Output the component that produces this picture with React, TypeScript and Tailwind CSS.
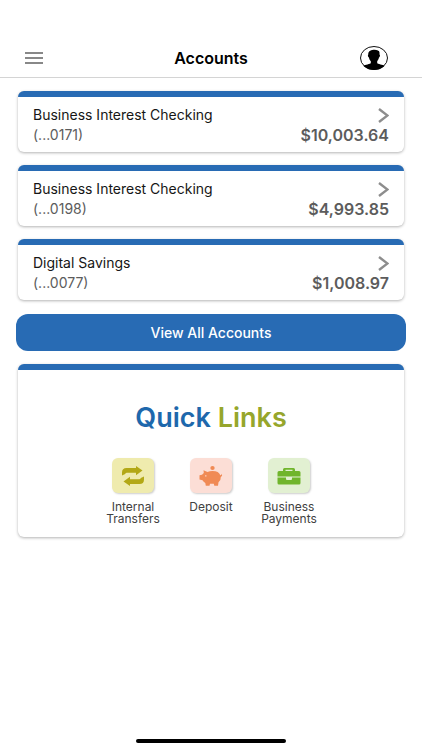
interface Account {
  name: string
  mask: string
  balance: string
}

const accounts: Account[] = [
  { name: 'Business Interest Checking', mask: '(...0171)', balance: '$10,003.64' },
  { name: 'Business Interest Checking', mask: '(...0198)', balance: '$4,993.85' },
  { name: 'Digital Savings', mask: '(...0077)', balance: '$1,008.97' },
]

const quickLinks = [
  { label: 'Internal Transfers', tile: 'bg-[#efebae] text-[#b3a816]', icon: <TransferIcon /> },
  { label: 'Deposit', tile: 'bg-[#fcded6] text-[#f08a55]', icon: <PiggyIcon /> },
  { label: 'Business Payments', tile: 'bg-[#e2f0d2] text-[#70b52c]', icon: <BriefcaseIcon /> },
]

function TransferIcon() {
  return (
    <svg viewBox="0 0 24 20" className="h-5 w-6" fill="currentColor" aria-hidden="true">
      <path d="M1 9.500V6.500Q1 2 5.500 2H15V0L21.500 4.600 15 9.200V6.700H6Q4.500 6.700 4.200 8Z" />
      <path d="M23 10.500V13.500Q23 18 18.500 18H9V20L2.500 15.400 9 10.800V13.300H18Q19.500 13.300 19.800 12Z" />
    </svg>
  )
}

function PiggyIcon() {
  return (
    <svg viewBox="0 0 24 20" className="h-5 w-6" fill="currentColor" aria-hidden="true">
      <ellipse cx="13.500" cy="2" rx="2.200" ry="1.900" />
      <path
        fillRule="evenodd"
        d="M4.500 4.200 8.500 6Q10.500 5 13.500 5 20 5 21.300 9.300 22.700 9.300 22.500 7.800 24 9.500 21.800 11 22 14.500 19.500 16.300L19 19.700H15.300L14.800 17.800H11L10.500 19.700H6.800L6.300 17Q4.500 16 3.500 14.300L.5 13.500V9.300L3 8.800 4.800 7ZM6.200 9.300V10.500H7.400V9.300Z"
      />
    </svg>
  )
}

function BriefcaseIcon() {
  return (
    <svg viewBox="0 0 24 18" className="h-[18px] w-6" fill="currentColor" aria-hidden="true">
      <path
        fillRule="evenodd"
        d="M6 4V2.500Q6 1 7.500 1H16.500Q18 1 18 2.500V4H22Q23.500 4 23.500 5.500V9.500H.5V5.500Q.5 4 2 4ZM8.500 4H15.500V2.700H8.500Z"
      />
      <path d="M.5 10.500H9V12Q9 13 10 13H14Q15 13 15 12V10.500H23.500V16Q23.500 17.500 22 17.500H2Q.5 17.500.5 16Z" />
    </svg>
  )
}

function ProfileIcon() {
  return (
    <svg viewBox="0 0 30 26" className="h-[26px] w-[30px]" aria-hidden="true">
      <clipPath id="profile-clip">
        <ellipse cx="15" cy="13" rx="14" ry="12" />
      </clipPath>
      <ellipse cx="15" cy="13" rx="13.500" ry="11.500" fill="#fff" stroke="#111" />
      <path
        clipPath="url(#profile-clip)"
        d="M9.300 9.500C8.500 3.500 20.500 3.500 20.500 7.500V9.500C21.500 10 20.800 12 20 12.500 19.600 14.500 18.800 15.500 18.200 16.200V18.200C20.500 19.700 25 19.300 26.500 22V26H3.500V22C5 19.300 9.500 19.700 11.800 18.200V16.200C11 15.300 10.200 14.300 10 12.500 9 12 8.500 10 9.300 9.500Z"
      />
    </svg>
  )
}

function AccountCard({ account }: { account: Account }) {
  return (
    <a
      href="#account"
      className="block rounded-md border-t-6 border-[#286bb4] bg-white px-[15px] pt-2 pb-[7px] shadow-[0_1px_3px_rgba(0,0,0,0.3)]"
    >
      <div className="flex h-5 items-center justify-between">
        <h2 className="text-sm text-[#161616]">{account.name}</h2>
        <svg viewBox="0 0 11 15" className="h-[15px] w-[11px]" fill="none" stroke="#8d8d8d" strokeWidth="2.400" aria-hidden="true">
          <path d="M1 1 9.500 7.500 1 14" />
        </svg>
      </div>
      <div className="flex h-5 items-center justify-between text-[#5c5c5c]">
        <span className="text-sm">{account.mask}</span>
        <span className="text-base font-semibold">{account.balance}</span>
      </div>
    </a>
  )
}

export default function App() {
  return (
    <div className="flex min-h-screen flex-col bg-white font-['Inter',sans-serif]">
      <header className="grid grid-cols-3 items-center border-b border-[#d4d4d4] px-[25px] pt-[39px]">
        <button aria-label="Menu" className="flex h-[38px] w-[18px] flex-col justify-center gap-[3px]">
          <span className="h-0.5 w-full bg-[#888]" />
          <span className="h-0.5 w-full bg-[#888]" />
          <span className="h-0.5 w-full bg-[#888]" />
        </button>
        <h1 className="text-center text-base font-semibold text-black">Accounts</h1>
        <button aria-label="Profile" className="mr-2 justify-self-end">
          <ProfileIcon />
        </button>
      </header>

      <main className="flex flex-col gap-[13px] px-[18px] pt-[13px]">
        {accounts.map((account) => (
          <AccountCard key={account.mask} account={account} />
        ))}

        <button className="-mx-0.5 mt-px h-[37px] rounded-xl bg-[#286bb4] text-sm font-medium text-white">
          View All Accounts
        </button>

        <section className="rounded-md border-t-6 border-[#286bb4] bg-white pt-8 pb-3 shadow-[0_1px_3px_rgba(0,0,0,0.3)]">
          <h2 className="text-center text-[27px] leading-8 font-semibold text-[#1e68ac]">
            Quick <span className="text-[#96a62c]">Links</span>
          </h2>
          <div className="mt-6 flex justify-center">
            {quickLinks.map((link) => (
              <a key={link.label} href="#quick-link" className="flex w-[78px] flex-col items-center">
                <span
                  className={`flex h-[35px] w-[42px] items-center justify-center rounded-md shadow-[1px_1px_2px_rgba(0,0,0,0.2)] ${link.tile}`}
                >
                  {link.icon}
                </span>
                <span className="mt-2 w-16 text-center text-xs leading-3 text-[#414141]">{link.label}</span>
              </a>
            ))}
          </div>
        </section>
      </main>

      <div className="mx-auto mt-auto mb-[7px] h-1 w-[150px] rounded-full bg-black" />
    </div>
  )
}
